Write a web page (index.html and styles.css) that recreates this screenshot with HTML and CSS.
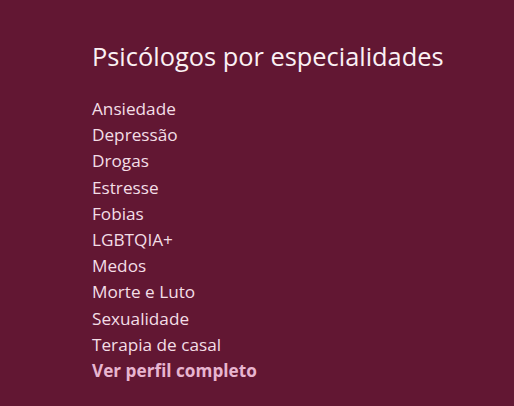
FILE: index.html
```html
<!DOCTYPE html>
<html lang="pt">
<head>
<meta charset="utf-8">
<link rel="stylesheet" href="styles.css">
</head>
<body>
<section class="specialties">
  <h2 class="title">Psicólogos por especialidades</h2>
  <ul class="list">
    <li><a href="#">Ansiedade</a></li>
    <li><a href="#">Depressão</a></li>
    <li><a href="#">Drogas</a></li>
    <li><a href="#">Estresse</a></li>
    <li><a href="#">Fobias</a></li>
    <li><a href="#">LGBTQIA+</a></li>
    <li><a href="#">Medos</a></li>
    <li><a href="#">Morte e Luto</a></li>
    <li><a href="#">Sexualidade</a></li>
    <li><a href="#">Terapia de casal</a></li>
    <li><a href="#" class="more">Ver perfil completo</a></li>
  </ul>
</section>
</body>
</html>
```

FILE: styles.css
```css
html, body {
  margin: 0;
  padding: 0;
  background: #621733;
  height: 100%;
}
.specialties {
  padding: 39px 0 0 92px;
  font-family: "Open Sans", "Liberation Sans", sans-serif;
}
.title {
  margin: 0 0 23px;
  font-size: 25.4px;
  font-weight: 400;
  color: #fbf1f4;
  line-height: 34px;
}
.list {
  list-style: none;
  margin: 0;
  padding: 0;
}
.list li {
  font-size: 17.2px;
  line-height: 26.2px;
}
.list a {
  color: #f3dee6;
  text-decoration: none;
}
.list a.more {
  color: #e8b5d0;
  font-weight: 700;
}
```
